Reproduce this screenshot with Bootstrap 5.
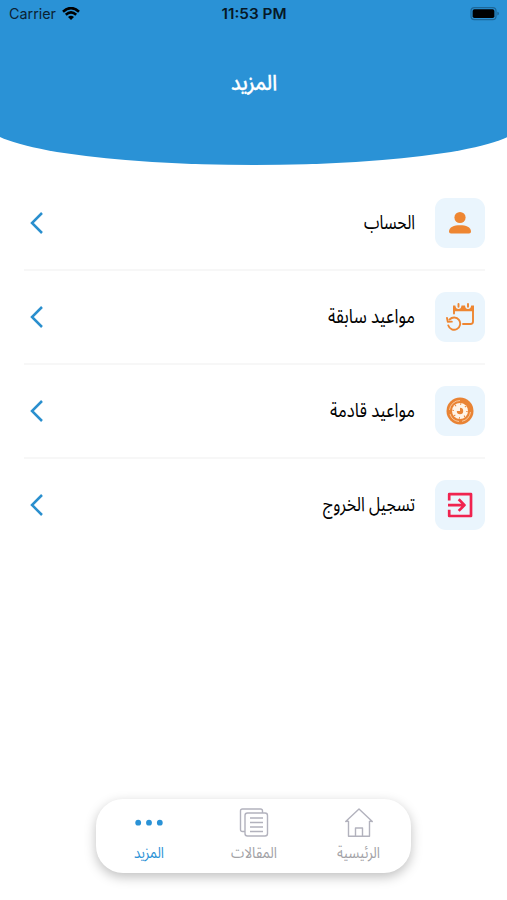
<!DOCTYPE html>
<html lang="ar" dir="rtl">
<head>
<meta charset="utf-8">
<meta name="viewport" content="width=device-width, initial-scale=1">
<title>المزيد</title>
<link href="https://cdn.jsdelivr.net/npm/bootstrap@5.3.0/dist/css/bootstrap.min.css" rel="stylesheet">
<style>
body{font-family:"Noto Sans Arabic","Noto Sans","DejaVu Sans",sans-serif;background:#fff;color:#111}
.screen{height:900px}
.hero{height:165px}
.hero-shape{top:0;left:-12.5px;width:532px;height:164.5px;background:#2a92d6;border-radius:0 0 50% 50%/0 0 40px 40px}
.status{height:27px;font:15px Inter,sans-serif;color:#0b2233;padding:0 8px 0 9px}
.status .clock{font-weight:600;color:#061826}
.side{width:100px}
.wifi{margin-left:6px}
.fit{display:block;overflow:visible}
.menu-row{height:94px;margin:0 22px 0 24px;border-bottom:2px solid #f7f7f7}
.menu-row:last-child{border-color:transparent}
.tile{width:50px;height:50px;border-radius:11px;background:#eaf5fd;margin-left:20px}
.chev{margin-left:5px}
.dock{width:315px;height:74px;margin-bottom:27px;border-radius:27px;background:#fff;box-shadow:0 4px 12px rgba(0,0,0,.25);color:#a2a2a6}
.tab{width:105px}
.tab.on{color:#2a92d6}
</style>
<script src="https://cdn.jsdelivr.net/npm/bootstrap@5.3.0/dist/js/bootstrap.bundle.min.js"></script>
</head>
<body>
<div class="screen d-flex flex-column position-relative overflow-hidden">
  <header class="hero position-relative flex-shrink-0">
    <div class="hero-shape position-absolute"></div>
    <div class="position-relative">
      <div class="status d-flex justify-content-between align-items-center" dir="ltr">
        <div class="side d-flex align-items-center">
          <svg class="fit" width="47" height="20" viewBox="0 0 47 20"><text x="0" y="15" font-size="14.5" textLength="47" lengthAdjust="spacingAndGlyphs" fill="currentColor">Carrier</text></svg>
          <svg class="wifi" width="18" height="14" viewBox="0 0 18 14" fill="none" stroke="#000" stroke-width="2.6"><path d="M1 4.700Q9-2.500 17 4.700M3.800 7.700Q9 3 14.200 7.700"/><path d="M9 13L6 10Q9 7.500 12 10Z" fill="#000" stroke="none"/></svg>
        </div>
        <svg class="fit clock" width="65" height="20" viewBox="0 0 65 20"><text x="-.5" y="15" font-size="14.500" textLength="65" lengthAdjust="spacingAndGlyphs" fill="currentColor">11:53 PM</text></svg>
        <div class="side text-end">
          <svg class="d-block ms-auto" width="29" height="14" viewBox="0 0 29 14"><rect x="1" y=".6" width="25" height="12" rx="3.4" fill="none" stroke="#1d6798" stroke-width="1.2"/><rect x="2.600" y="2.200" width="21.800" height="8.800" rx="1.8"/><path d="M27.300 4.800Q29 5 29 6.600T27.300 8.600Z" fill="#1d6798"/></svg>
        </div>
      </div>
      <h1 class="m-0 d-flex justify-content-center text-white pt-5"><svg class="fit" width="46" height="26" viewBox="0 0 46 26"><text x="46" y="15" font-size="21.5" font-weight="500" textLength="46" lengthAdjust="spacingAndGlyphs" fill="currentColor" stroke="currentColor" stroke-width=".3">المزيد</text></svg></h1>
    </div>
  </header>

  <main class="flex-grow-1 pt-2">
    <div class="pt-1">
    <a class="menu-row d-flex align-items-center text-reset text-decoration-none" href="#">
      <span class="tile d-flex align-items-center justify-content-center"><svg width="24" height="24" viewBox="0 0 24 24" fill="#ee8632"><circle cx="12" cy="6.500" r="5.600"/><path d="M1 20.700C1 16 6 14.300 12 14.300S23 16 23 20.700Q23 22.500 21 22.500H3Q1 22.500 1 20.700Z"/></svg></span>
      <svg class="fit" width="52" height="26" viewBox="0 0 52 26"><text x="52" y="18.500" font-size="20" textLength="51" lengthAdjust="spacingAndGlyphs">الحساب</text></svg>
      <svg class="chev me-auto" width="16" height="24" viewBox="0 0 16 24" fill="none" stroke="#2a8fce" stroke-width="2.500"><path d="M13 2L3 12L13 22"/></svg>
    </a>
    <a class="menu-row d-flex align-items-center text-reset text-decoration-none" href="#">
      <span class="tile d-flex align-items-center justify-content-center"><svg width="28" height="28" viewBox="0 0 28 28" fill="none" stroke="#ee8632" stroke-width="1.900" stroke-linecap="round" stroke-linejoin="round"><path d="M8 10.500V4M27 4V18.500Q27 21 24.500 21H17"/><path d="M7.100 2.500H9.300Q9.800 6 12.500 6T15.500 2.500H19Q19.300 6 22 6T25.200 2.500H28V8.300H7.100Z" fill="#ee8632" stroke="none"/><path d="M12.500 1V3.700M22 1V3.700"/><path d="M3.600 16.500A6.100 6.100 0 1 1 2.300 22.500M1 15L1.800 18.900L5.800 18.600"/></svg></span>
      <svg class="fit" width="87" height="26" viewBox="0 0 87 26"><text x="87" y="18.500" font-size="20" textLength="87" lengthAdjust="spacingAndGlyphs">مواعيد سابقة</text></svg>
      <svg class="chev me-auto" width="16" height="24" viewBox="0 0 16 24" fill="none" stroke="#2a8fce" stroke-width="2.500"><path d="M13 2L3 12L13 22"/></svg>
    </a>
    <a class="menu-row d-flex align-items-center text-reset text-decoration-none" href="#">
      <span class="tile d-flex align-items-center justify-content-center"><svg width="28" height="28" viewBox="0 0 28 28" fill="none"><circle cx="14" cy="14" r="13.500" fill="#e98334"/><circle cx="14" cy="14" r="8" fill="#fff4e8"/><path d="M3.500 13A10.500 10.500 0 0 1 14 3.500M24.500 15A10.500 10.500 0 0 1 16 24.300M4 17A10.500 10.500 0 0 0 13 24.500" stroke="#f9c99e"/><circle cx="14" cy="14" r="6.900" stroke="#e98334" stroke-width="1.500" stroke-dasharray="1 4.420"/><path d="M14 9.500V14H10.800A3.200 3.200 0 1 0 14 10.800" fill="#e98334"/></svg></span>
      <svg class="fit" width="85" height="26" viewBox="0 0 85 26"><text x="85" y="18.500" font-size="20" textLength="85" lengthAdjust="spacingAndGlyphs">مواعيد قادمة</text></svg>
      <svg class="chev me-auto" width="16" height="24" viewBox="0 0 16 24" fill="none" stroke="#2a8fce" stroke-width="2.500"><path d="M13 2L3 12L13 22"/></svg>
    </a>
    <a class="menu-row d-flex align-items-center text-reset text-decoration-none" href="#">
      <span class="tile d-flex align-items-center justify-content-center"><svg width="26" height="26" viewBox="0 0 26 26" fill="none" stroke="#f0234f" stroke-width="2.700" stroke-linejoin="round"><path d="M2.200 8.500V2.200H24V24H2.200V17.700M1 13.100H17M11.700 7.300L17.500 13.100L11.700 18.900"/></svg></span>
      <svg class="fit" width="92" height="26" viewBox="0 0 92 26"><text x="92" y="18.500" font-size="20" textLength="92" lengthAdjust="spacingAndGlyphs">تسجيل الخروج</text></svg>
      <svg class="chev me-auto" width="16" height="24" viewBox="0 0 16 24" fill="none" stroke="#2a8fce" stroke-width="2.500"><path d="M13 2L3 12L13 22"/></svg>
    </a>
    </div>
  </main>

  <nav class="dock d-flex mx-auto flex-shrink-0">
    <div class="tab d-flex flex-column align-items-center pt-2">
      <svg width="30" height="30" viewBox="0 0 30 30" fill="none" stroke="#b2b2bd" stroke-width="1.400" stroke-linejoin="round"><path d="M4.500 14V29.300H25.500V14M4.500 14L1.700 14.500L15 2L28.300 14.500L25.500 14M11.500 29.300V21H18.500V29.300"/></svg>
      <svg class="fit mt-1" width="43" height="22" viewBox="0 0 43 22"><text x="43" y="16.500" font-size="15.500" textLength="43" lengthAdjust="spacingAndGlyphs" fill="currentColor">الرئيسية</text></svg>
    </div>
    <div class="tab d-flex flex-column align-items-center pt-2">
      <svg width="30" height="30" viewBox="0 0 30 30" fill="none" stroke="#b2b2bd" stroke-width="1.400" stroke-linejoin="round"><rect x="6" y="6" width="22.500" height="23" rx="2.500"/><path d="M6 24.500H3.500Q1.500 24.500 1.500 22.500V4Q1.500 2 3.500 2H21.500Q23.500 2 23.500 4V6M11 11H24M11 15.500H24M11 20H24M11 24.500H24"/></svg>
      <svg class="fit mt-1" width="46" height="22" viewBox="0 0 46 22"><text x="46" y="16.500" font-size="15.500" textLength="46" lengthAdjust="spacingAndGlyphs" fill="currentColor">المقالات</text></svg>
    </div>
    <div class="tab on d-flex flex-column align-items-center pt-2">
      <svg width="30" height="30" viewBox="0 0 30 30" fill="currentColor"><circle cx="4.200" cy="15.700" r="2.900"/><circle cx="15" cy="15.700" r="2.900"/><circle cx="25.800" cy="15.700" r="2.900"/></svg>
      <svg class="fit mt-1" width="30" height="22" viewBox="0 0 30 22"><text x="30" y="16.500" font-size="15.500" textLength="30" lengthAdjust="spacingAndGlyphs" fill="currentColor">المزيد</text></svg>
    </div>
  </nav>
</div>
</body>
</html>
